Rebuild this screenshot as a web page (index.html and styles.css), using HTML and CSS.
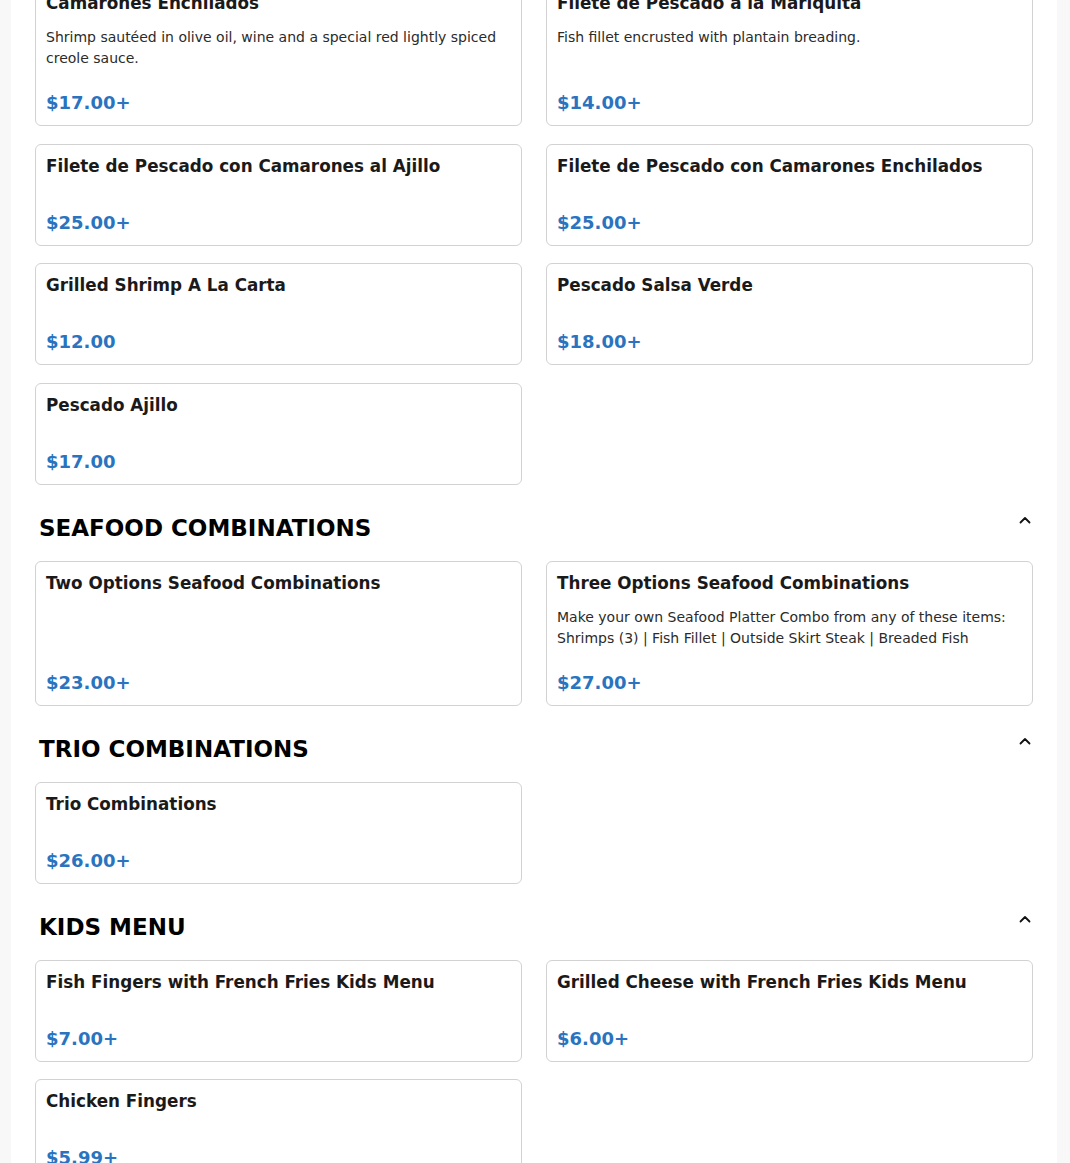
FILE: index.html
```html
<!DOCTYPE html>
<html lang="en">
<head>
<meta charset="utf-8">
<title>Menu</title>
<link rel="stylesheet" href="styles.css">
</head>
<body>
<main class="panel">
  <section class="section first">
    <div class="grid">
      <article class="card">
        <h3 class="card-title">Camarones Enchilados</h3>
        <p class="card-desc">Shrimp sautéed in olive oil, wine and a special red lightly spiced creole sauce.</p>
        <div class="card-price">$17.00+</div>
      </article>
      <article class="card">
        <h3 class="card-title">Filete de Pescado a la Mariquita</h3>
        <p class="card-desc">Fish fillet encrusted with plantain breading.</p>
        <div class="card-price">$14.00+</div>
      </article>
      <article class="card">
        <h3 class="card-title">Filete de Pescado con Camarones al Ajillo</h3>
        <p class="card-desc"></p>
        <div class="card-price">$25.00+</div>
      </article>
      <article class="card">
        <h3 class="card-title">Filete de Pescado con Camarones Enchilados</h3>
        <p class="card-desc"></p>
        <div class="card-price">$25.00+</div>
      </article>
      <article class="card">
        <h3 class="card-title">Grilled Shrimp A La Carta</h3>
        <p class="card-desc"></p>
        <div class="card-price">$12.00</div>
      </article>
      <article class="card">
        <h3 class="card-title">Pescado Salsa Verde</h3>
        <p class="card-desc"></p>
        <div class="card-price">$18.00+</div>
      </article>
      <article class="card">
        <h3 class="card-title">Pescado Ajillo</h3>
        <p class="card-desc"></p>
        <div class="card-price">$17.00</div>
      </article>
    </div>
  </section>

  <section class="section">
    <header class="section-head">
      <h2 class="section-title">SEAFOOD COMBINATIONS</h2>
      <svg class="chevron" viewBox="0 0 12 8" width="12" height="8" aria-hidden="true"><path d="M1.5 6.5 L6 2 L10.5 6.5" fill="none" stroke="#111" stroke-width="1.8" stroke-linecap="round" stroke-linejoin="round"/></svg>
    </header>
    <div class="grid">
      <article class="card">
        <h3 class="card-title">Two Options Seafood Combinations</h3>
        <p class="card-desc"></p>
        <div class="card-price">$23.00+</div>
      </article>
      <article class="card">
        <h3 class="card-title">Three Options Seafood Combinations</h3>
        <p class="card-desc">Make your own Seafood Platter Combo from any of these items: Shrimps (3) | Fish Fillet | Outside Skirt Steak | Breaded Fish</p>
        <div class="card-price">$27.00+</div>
      </article>
    </div>
  </section>

  <section class="section">
    <header class="section-head">
      <h2 class="section-title">TRIO COMBINATIONS</h2>
      <svg class="chevron" viewBox="0 0 12 8" width="12" height="8" aria-hidden="true"><path d="M1.5 6.5 L6 2 L10.5 6.5" fill="none" stroke="#111" stroke-width="1.8" stroke-linecap="round" stroke-linejoin="round"/></svg>
    </header>
    <div class="grid">
      <article class="card">
        <h3 class="card-title">Trio Combinations</h3>
        <p class="card-desc"></p>
        <div class="card-price">$26.00+</div>
      </article>
    </div>
  </section>

  <section class="section">
    <header class="section-head">
      <h2 class="section-title">KIDS MENU</h2>
      <svg class="chevron" viewBox="0 0 12 8" width="12" height="8" aria-hidden="true"><path d="M1.5 6.5 L6 2 L10.5 6.5" fill="none" stroke="#111" stroke-width="1.8" stroke-linecap="round" stroke-linejoin="round"/></svg>
    </header>
    <div class="grid">
      <article class="card">
        <h3 class="card-title">Fish Fingers with French Fries Kids Menu</h3>
        <p class="card-desc"></p>
        <div class="card-price">$7.00+</div>
      </article>
      <article class="card">
        <h3 class="card-title">Grilled Cheese with French Fries Kids Menu</h3>
        <p class="card-desc"></p>
        <div class="card-price">$6.00+</div>
      </article>
      <article class="card">
        <h3 class="card-title">Chicken Fingers</h3>
        <p class="card-desc"></p>
        <div class="card-price">$5.99+</div>
      </article>
    </div>
  </section>
</main>
</body>
</html>
```

FILE: styles.css
```css
html, body {
  margin: 0;
  padding: 0;
}

body {
  background: #f8f8f8;
  font-family: "DejaVu Sans", "Liberation Sans", sans-serif;
  color: #1a1a1a;
}

.panel {
  margin: 0 13px 0 11px;
  padding: 0 24px 40px;
  background: #ffffff;
}

.section {
  padding-top: 27px;
}

.section.first {
  padding-top: 0;
  margin-top: -19px;
}

.section-head {
  display: flex;
  align-items: center;
  justify-content: space-between;
  padding: 0 0 0 4px;
  margin-bottom: 17px;
}

.section-title {
  margin: 0;
  font-size: 23px;
  line-height: 32px;
  font-weight: 700;
  color: #000;
}

.chevron {
  margin-right: 2px;
  margin-top: -16px;
}

.grid {
  display: grid;
  grid-template-columns: 1fr 1fr;
  column-gap: 24px;
  row-gap: 17.5px;
}

.card {
  display: flex;
  flex-direction: column;
  border: 1px solid #d2d2d2;
  border-radius: 6px;
  padding: 9px 10px 8px;
  background: #fff;
}

.card-title {
  margin: 0;
  font-size: 16.8px;
  line-height: 24px;
  font-weight: 700;
  color: #1a1a1a;
}

.card-desc {
  margin: 12px 0 19px;
  font-size: 14px;
  line-height: 21px;
  color: #2b2b2b;
}

.card-desc:not(:empty) {
  margin-bottom: 20px;
}

.card-price {
  margin-top: auto;
  font-size: 18px;
  line-height: 28px;
  font-weight: 700;
  color: #2a74bf;
}
```
